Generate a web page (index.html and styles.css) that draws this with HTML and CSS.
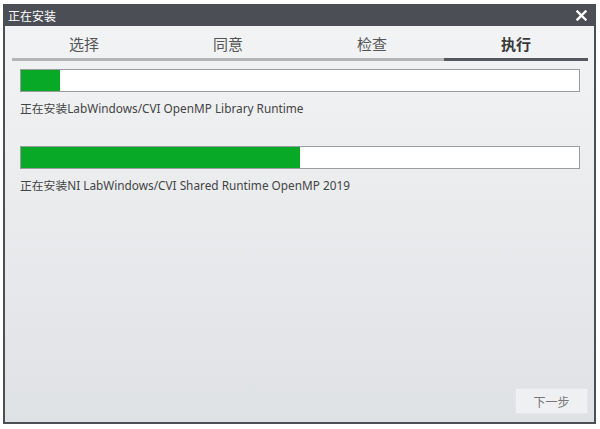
FILE: index.html
```html
<!DOCTYPE html>
<html lang="zh-CN">

<head>
    <meta charset="UTF-8">
    <title>正在安装</title>
    <link rel="stylesheet" href="styles.css">
</head>

<body>
    <div class="window">
        <div class="titlebar">
            <span class="title">正在安装</span>
            <span class="close">
                <svg width="11" height="11" viewBox="0 0 11 11">
                    <path d="M1.5 1.5 L9.5 9.5 M9.5 1.5 L1.5 9.5" stroke="#fff" stroke-width="2.4" stroke-linecap="square"/>
                </svg>
            </span>
        </div>
        <div class="content">
            <div class="tabs">
                <div class="tab">选择</div>
                <div class="tab">同意</div>
                <div class="tab">检查</div>
                <div class="tab active">执行</div>
            </div>

            <div class="task">
                <div class="bar"><div class="fill" style="width: 7%"></div></div>
                <p class="label">正在安装LabWindows/CVI OpenMP Library Runtime</p>
            </div>

            <div class="task">
                <div class="bar"><div class="fill" style="width: 50%"></div></div>
                <p class="label">正在安装NI LabWindows/CVI Shared Runtime OpenMP 2019</p>
            </div>

            <div class="footer">
                <button class="next">下一步</button>
            </div>
        </div>
    </div>
</body>

</html>
```

FILE: styles.css
```css
body {
    margin: 0;
    background: #fff;
    font-family: "Noto Sans", "Noto Sans CJK SC", sans-serif;
    color: #333;
}

.window {
    margin: 4px 0 0 3px;
    width: 593px;
    height: 420px;
    display: flex;
    flex-direction: column;
}

.titlebar {
    height: 22px;
    background: #4b4f55;
    display: flex;
    align-items: center;
    justify-content: space-between;
    padding: 0 9px 0 5px;
}

.title {
    color: #fff;
    font-size: 12px;
    font-family: "Noto Sans CJK SC", sans-serif;
}

.close {
    display: flex;
}

.content {
    flex: 1;
    border: 2px solid #4b4f55;
    border-top: none;
    background: linear-gradient(#f2f3f5, #dfe2e4);
    display: flex;
    flex-direction: column;
}

.tabs {
    display: flex;
    margin: 0 6px 0 7px;
}

.tab {
    flex: 1;
    text-align: center;
    font-family: "Noto Sans CJK SC", sans-serif;
    font-size: 15px;
    color: #555;
    padding-top: 7px;
    height: 25px;
    border-bottom: 3px solid #b3b5b7;
}

.tab.active {
    color: #3a3a3a;
    font-weight: 600;
    border-bottom-color: #545960;
}

.task {
    margin: 8px 14px 0 15px;
}

.task + .task {
    margin-top: 30px;
}

.bar {
    height: 21px;
    border: 1px solid #9b9c9e;
    background: #fff;
}

.fill {
    height: 100%;
    background: #09a928;
}

.label {
    margin: 7px 0 0;
    font-size: 11.8px;
    color: #444;
}

.footer {
    margin-top: auto;
    display: flex;
    justify-content: flex-end;
    padding: 0 6px 8px 0;
}

.next {
    width: 73px;
    height: 26px;
    border: 1px solid #e4e6e8;
    background: #eef0f2;
    color: #777;
    font-family: "Noto Sans CJK SC", sans-serif;
    font-size: 12px;
}
```
